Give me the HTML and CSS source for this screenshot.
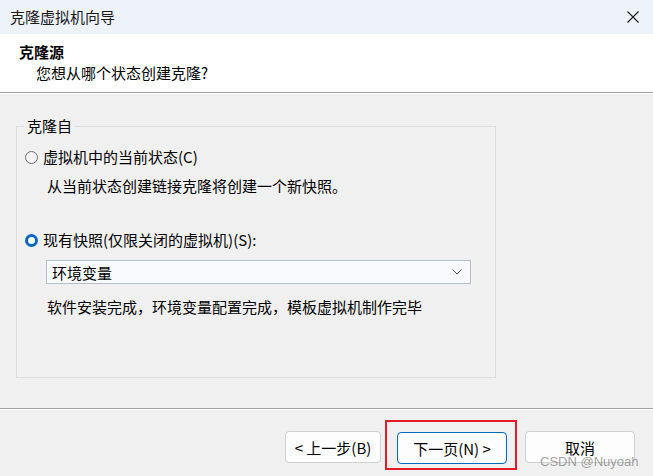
FILE: index.html
```html
<!DOCTYPE html>
<html lang="zh-CN">
<head>
<meta charset="utf-8">
<title>克隆虚拟机向导</title>
<link rel="stylesheet" href="styles.css">
</head>
<body>
<div class="window">
  <div class="titlebar">
    <span class="title">克隆虚拟机向导</span>
    <span class="close">
      <svg width="12" height="12" viewBox="0 0 12 12"><path d="M0.5 0.5 L11.5 11.5 M11.5 0.5 L0.5 11.5" stroke="#1a1a1a" stroke-width="1.1" fill="none"/></svg>
    </span>
  </div>
  <div class="header">
    <div class="h-title">克隆源</div>
    <div class="h-sub">您想从哪个状态创建克隆?</div>
  </div>
  <div class="content">
    <fieldset class="group">
      <legend class="legend">克隆自</legend>
      <div class="option first">
        <span class="radio"></span>
        <span class="label">虚拟机中的当前状态(C)</span>
      </div>
      <div class="desc d1">从当前状态创建链接克隆将创建一个新快照。</div>
      <div class="option second">
        <span class="radio checked"></span>
        <span class="label">现有快照(仅限关闭的虚拟机)(S):</span>
      </div>
      <div class="select">
        <span>环境变量</span>
        <svg width="10" height="6" viewBox="0 0 10 6"><path d="M0.5 0.5 L5 5 L9.5 0.5" stroke="#555" stroke-width="1" fill="none"/></svg>
      </div>
      <div class="desc d3">软件安装完成，环境变量配置完成，模板虚拟机制作完毕</div>
    </fieldset>
  </div>
  <div class="footer">
    <button class="btn back">&lt; 上一步(B)</button>
    <span class="highlight"><button class="btn next">下一页(N) &gt;</button></span>
    <button class="btn cancel">取消</button>
    <span class="watermark">CSDN @Nuyoah</span>
  </div>
</div>
</body>
</html>
```

FILE: styles.css
```css
html, body {
  margin: 0;
  padding: 0;
}
body {
  width: 653px;
  height: 476px;
  overflow: hidden;
  font-family: "Noto Sans CJK SC", "Noto Sans", sans-serif;
  font-size: 15px;
  color: #000;
}
.window {
  width: 653px;
  height: 476px;
  display: flex;
  flex-direction: column;
  background: #f0f0f0;
}
.titlebar {
  height: 34px;
  background: #eef2f9;
  display: flex;
  align-items: center;
  justify-content: space-between;
  padding: 0 14px 0 10px;
  flex: none;
}
.title {
  font-size: 15px;
  line-height: 20px;
  color: #1a1a1a;
}
.close {
  display: flex;
  width: 12px;
  height: 12px;
}
.header {
  flex: none;
  background: #fff;
  border-bottom: 1px solid #a0a0a0;
  box-shadow: 0 1px 0 #fff;
  padding: 0 0 0 19px;
  box-sizing: border-box;
  height: 59px;
}
.h-title {
  font-weight: bold;
  font-size: 15px;
  line-height: 20px;
  margin-top: 8px;
}
.h-sub {
  font-size: 15px;
  line-height: 20px;
  margin-top: 1px;
  padding-left: 17px;
}
.content {
  flex: 1;
  padding: 23px 0 0 16px;
}
.group {
  margin: 0;
  width: 480px;
  height: 262px;
  box-sizing: border-box;
  border: 1px solid #dcdcdc;
  padding: 0 0 0 8px;
}
.legend {
  padding: 0 3px;
  margin-left: -1px;
  font-size: 15px;
  line-height: 20px;
}
.option {
  display: flex;
  align-items: center;
  height: 20px;
  gap: 5px;
}
.option.first {
  margin-top: 11px;
}
.option.second {
  margin-top: 34px;
}
.radio {
  width: 11px;
  height: 11px;
  border: 1px solid #6e6e6e;
  border-radius: 50%;
  background: #f6f6f6;
  flex: none;
}
.radio.checked {
  width: 7px;
  height: 7px;
  border: 3px solid #0067c0;
  background: #fff;
}
.label {
  line-height: 20px;
}
.desc {
  line-height: 20px;
  padding-left: 22px;
}
.d1 {
  margin-top: 9px;
}
.select {
  margin: 10px 0 0 21px;
  width: 425px;
  height: 24px;
  box-sizing: border-box;
  border: 1px solid #b3bfcd;
  background: #f8fafd;
  display: flex;
  align-items: center;
  justify-content: space-between;
  padding: 0 8px 0 5px;
}
.d3 {
  margin-top: 13px;
}
.footer {
  flex: none;
  height: 68px;
  border-top: 1px solid #a0a0a0;
  box-shadow: inset 0 1px 0 #fff;
  position: relative;
  display: flex;
  align-items: flex-start;
  padding: 22px 0 0 285px;
  box-sizing: border-box;
}
.btn {
  font-family: "Noto Sans CJK SC", "Noto Sans", sans-serif;
  font-size: 15px;
  height: 32px;
  border: 1px solid #d0d0d0;
  border-radius: 4px;
  background: #fdfdfd;
  color: #000;
  padding: 0;
  margin: 0;
}
.back {
  width: 96px;
}
.highlight {
  margin: -11px 0 0 4px;
  border: 2px solid #e21d27;
  padding: 10px 8px 4px 10px;
  display: flex;
}
.next {
  width: 110px;
  border-color: #0067c0;
}
.cancel {
  width: 110px;
  margin-left: 8px;
}
.watermark {
  position: absolute;
  left: 540px;
  top: 45px;
  font-family: "Liberation Sans", sans-serif;
  font-size: 13px;
  color: rgba(120, 120, 120, 0.7);
  line-height: 16px;
}
```
